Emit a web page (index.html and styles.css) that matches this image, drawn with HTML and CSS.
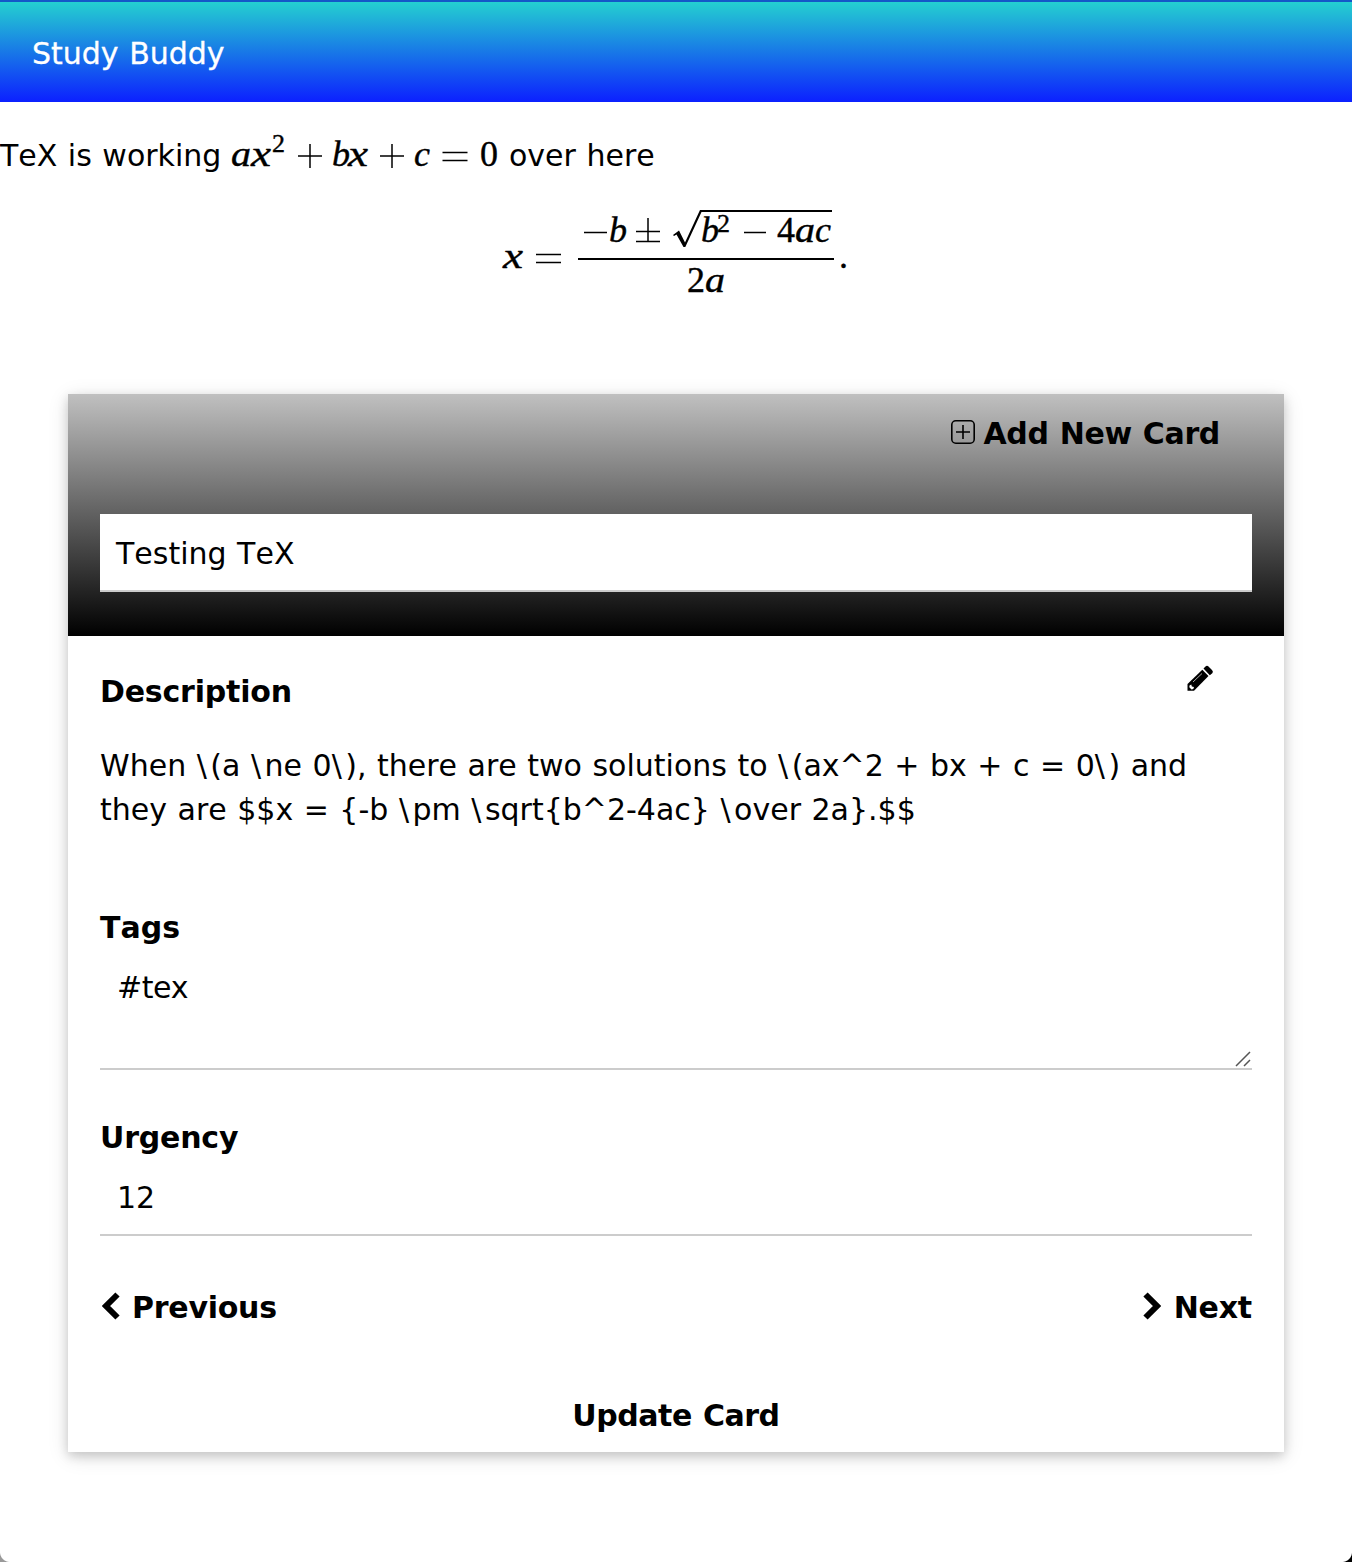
FILE: index.html
```html
<!DOCTYPE html>
<html lang="en">
<head>
<meta charset="utf-8">
<title>Study Buddy</title>
<link rel="stylesheet" href="styles.css">
</head>
<body>
<header class="topbar"><span class="brand">Study Buddy</span></header>
<main>
  <p class="intro"><span class="intro-lead">TeX is working</span>
    <svg class="math-inline" width="270" height="56" viewBox="230 122 270 56">
      <g class="math">
        <text class="var" x="231" y="166" textLength="20" lengthAdjust="spacingAndGlyphs">a</text>
        <text class="var" x="251" y="166" textLength="20" lengthAdjust="spacingAndGlyphs">x</text>
        <text class="sup" x="272" y="152">2</text>
        <text class="var" x="332" y="166">b</text>
        <text class="var" x="348" y="166" textLength="20" lengthAdjust="spacingAndGlyphs">x</text>
        <text class="var" x="414" y="166">c</text>
        <text x="480" y="166">0</text>
      </g>
      <path class="sign" d="M298 156H322M310 144V168M380 156H404M392 144V168M442.500 152.500H467.500M442.500 160.500H467.500"/>
    </svg>
    <span class="intro-tail">over here</span></p>
  <svg class="math-block" width="370" height="110" viewBox="490 200 370 110">
    <g class="math">
      <text class="var" x="503" y="268" textLength="20" lengthAdjust="spacingAndGlyphs">x</text>
      <text class="var" x="609" y="242">b</text>
      <text class="var" x="701" y="242">b</text>
      <text class="sup" x="717" y="232">2</text>
      <text x="777" y="242">4</text>
      <text class="var" x="795" y="242" textLength="20" lengthAdjust="spacingAndGlyphs">a</text>
      <text class="var" x="815" y="242">c</text>
      <text x="687" y="292">2</text>
      <text class="var" x="705" y="292" textLength="20" lengthAdjust="spacingAndGlyphs">a</text>
      <text x="839" y="268">.</text>
    </g>
    <path class="sign" d="M536 254.500H561M536 262.500H561M584 232.500H607M636 231.500H660M648 218V241M636 241.500H660M744 232.500H766"/>
    <path d="M578 258H834V260H578ZM700 210H832V212H701.500L685.300 247H683.500L676.500 234.500L674 236L673 235L679 230.500L685 242.500Z"/>
  </svg>

  <section class="card">
    <div class="card-head">
      <div class="add-row">
        <svg class="icon-add" width="24" height="24" viewBox="0 0 24 24"><rect x=".8" y=".8" width="22.400" height="22.400" rx="4"/><path d="M5 12H19M12 5V19"/></svg>
        <span class="add-label">Add New Card</span>
      </div>
      <div class="field title-field">Testing TeX</div>
    </div>
    <div class="card-body">
      <div class="desc-head">
        <span class="label desc-label">Description</span>
        <svg class="icon-edit" width="27" height="27" viewBox="0 0 27 27"><path d="M.5 19L15.300 4.700L21.500 11L7 25.800H.5Z"/><path d="M16.500 3.500L18.500 1.500Q20 0 21.500 1.500L25 5Q26.700 6.700 25.300 8.200L22.800 10.300Z"/><path class="cut" d="M2.500 20.400L4.300 19.500L4.800 21.500L7 22L6.300 24L4.500 24.500L2.300 22.300Z"/><path class="glint" d="M6 17L15 8.500"/></svg>
      </div>
      <p class="desc"><span class="line">When <span class="bs">\</span>(a <span class="bs">\</span>ne 0<span class="bs">\</span>), there are two solutions to <span class="bs">\</span>(ax^2 + bx + c = 0<span class="bs">\</span>) and</span> <span class="line">they are $$x = {-b <span class="bs">\</span>pm <span class="bs">\</span>sqrt{b^2-4ac} <span class="bs">\</span>over 2a}.$$</span></p>
      <div class="label tags-label">Tags</div>
      <div class="field tags-field">#tex
        <svg class="grip" width="16" height="16" viewBox="0 0 16 16"><path d="M1 15L15 1M9 15L15 9"/></svg>
      </div>
      <div class="label urgency-label">Urgency</div>
      <div class="field urgency-field">12</div>
      <div class="nav">
        <div class="nav-item"><svg class="chev" width="18" height="28" viewBox="0 0 18 28"><path d="M15.500 2.500L4 14L15.500 25.500"/></svg><span class="prev">Previous</span></div>
        <div class="nav-item"><svg class="chev" width="18" height="28" viewBox="0 0 18 28"><path d="M2.500 2.500L14 14L2.500 25.500"/></svg><span class="next">Next</span></div>
      </div>
      <div class="update"><span>Update Card</span></div>
    </div>
  </section>
</main>
<i class="corner left"></i><i class="corner right"></i>
</body>
</html>
```
FILE: styles.css
```css
* { box-sizing: border-box; }
body {
  position: relative;
  margin: 0;
  height: 1562px;
  overflow: hidden;
  background: #fff;
  color: #000;
  font: 30px/44px Verdana, "DejaVu Sans", sans-serif;
  font-kerning: none;
  word-spacing: 1px;
}
p { margin: 0; }
svg { display: block; flex: none; }
.topbar {
  height: 102px;
  padding: 30px 32px 0;
  border-top: 2px solid #1458c8;
  background: linear-gradient(#24d0d0, #0c20ff);
  color: #fff;
}
.brand { -webkit-text-stroke: .3px; }
.intro { display: flex; height: 98px; padding-top: 32px; white-space: nowrap; }
.intro-lead { width: 230px; }
.intro-tail { margin-left: 9px; }
.math-inline { margin-top: -12px; }
.math { font: 36px "Liberation Serif", serif; stroke: #000; stroke-width: .4; }
.var { font-style: italic; }
.sup { font-size: 26px; }
.sign { fill: none; stroke: #000; stroke-width: 1.500; }
.math-block { margin: 0 0 84px 490px; }
.card {
  width: 1216px;
  height: 1058px;
  margin: 0 auto;
  box-shadow: 0 4px 10px rgba(0,0,0,.16), 0 4px 20px rgba(0,0,0,.12);
}
.card-head {
  height: 242px;
  padding: 18px 32px 0;
  background: linear-gradient(#c0c0c0, #000);
}
.add-row, .label, .nav, .update { font-weight: bold; letter-spacing: -.2px; }
.add-row {
  display: flex;
  justify-content: flex-end;
  gap: 8px;
  height: 102px;
  padding-right: 32px;
  letter-spacing: -.35px;
}
.icon-add { margin-top: 8px; fill: none; stroke: #000; stroke-width: 1.600; }
.field { border-bottom: 2px solid #ccc; background: #fff; }
.title-field { height: 78px; padding: 18px 16px 0; }
.card-body { padding: 30px 32px 0; }
.desc-head { display: flex; justify-content: space-between; height: 78px; padding: 4px 38px 0 0; }
.icon-edit { margin-top: -5px; }
.cut { fill: #fff; }
.glint { fill: none; stroke: #aaa; stroke-width: 1; }
.desc { height: 162px; white-space: nowrap; }
.line { display: block; }
.bs { letter-spacing: 3.500px; }
.tags-label { letter-spacing: 0; }
.tags-field { position: relative; height: 120px; padding: 16px 17px 0; letter-spacing: -.5px; }
.grip { position: absolute; right: 1px; bottom: 1px; fill: none; stroke: #555; stroke-width: 1.500; }
.urgency-label { margin-top: 46px; }
.urgency-field { height: 76px; padding: 16px 17px 0; }
.nav { display: flex; justify-content: space-between; margin-top: 50px; }
.nav-item { display: flex; gap: 13px; }
.nav-item:first-child { padding-left: 2px; gap: 12px; letter-spacing: -.25px; }
.chev { margin-top: 6px; fill: none; stroke: #000; stroke-width: 6; }
.update { margin-top: 64px; text-align: center; letter-spacing: -.45px; }
.corner { position: absolute; bottom: 0; width: 10px; height: 10px; }
.left { left: 0; background: radial-gradient(circle at 100% 0, transparent 9.500px, #999 10.500px); }
.right { right: 0; background: radial-gradient(circle at 0 0, transparent 9.500px, #000 10.500px); }
```
